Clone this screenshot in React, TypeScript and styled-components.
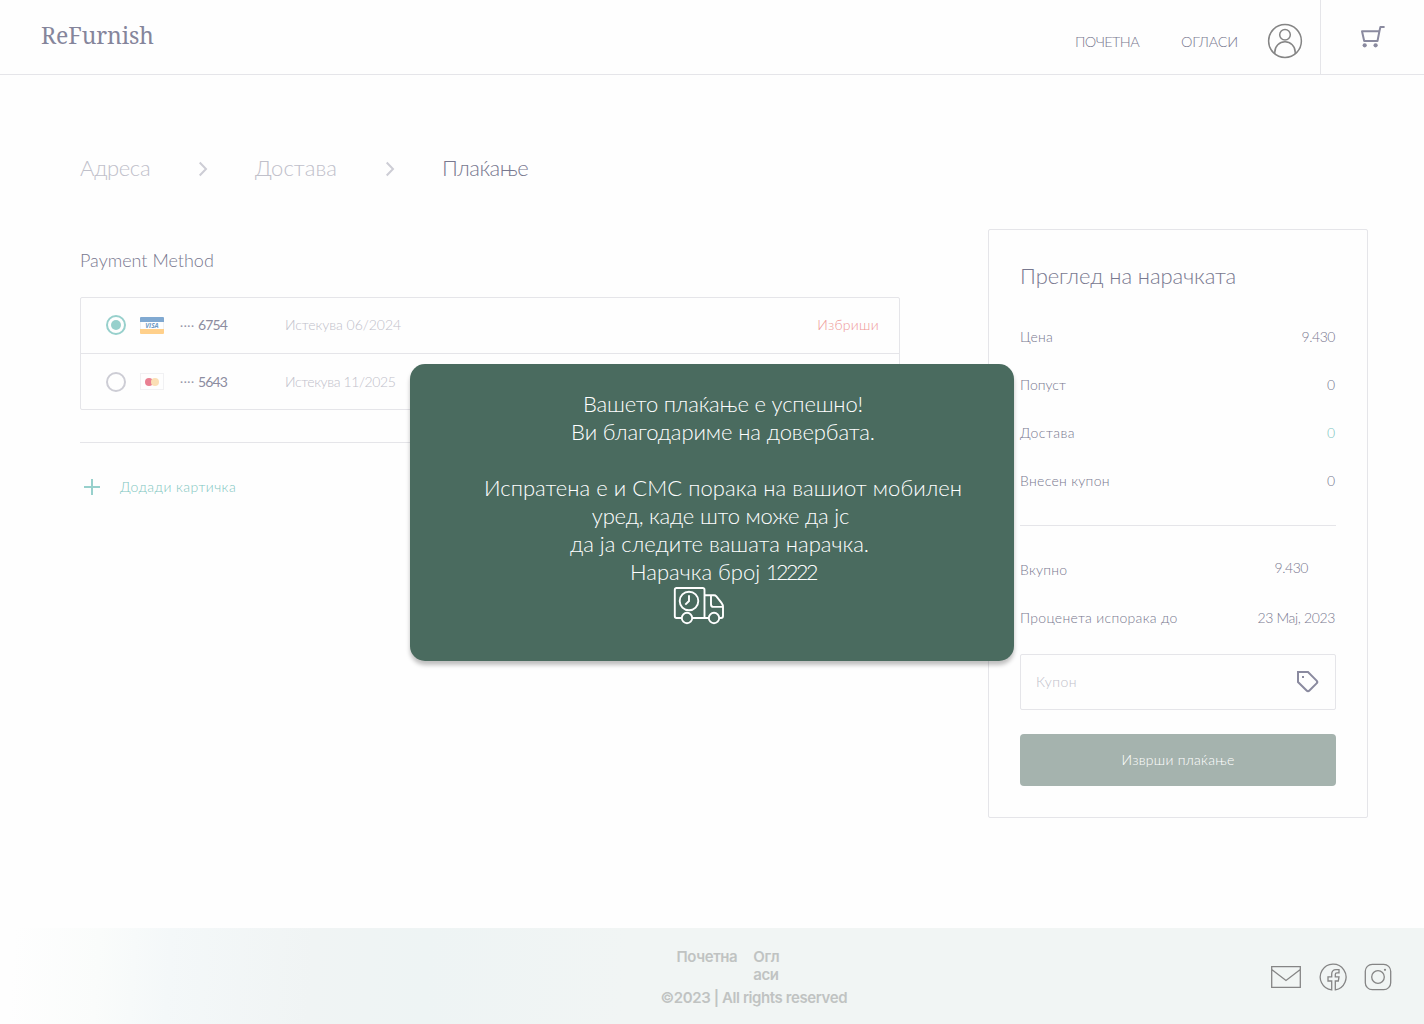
import React from "react";
import styled, { createGlobalStyle } from "styled-components";

const ink = "#78788f";
const iconInk = "#8a8a9f";
const pale = "#cdcdd5";
const paleText = "#c0c0ca";
const line = "#e5e5e9";
const teal = "#97d0cc";
const tealText = "#7fc6c1";
const grey = "#858585";

const GlobalStyle = createGlobalStyle`
  * { box-sizing: border-box; }
  body {
    margin: 0;
    background: #fefefe;
    color: ${ink};
    font: 300 14px/24px Lato, "Open Sans", sans-serif;
  }
  svg { display: block; flex: none; }
`;

const Page = styled.div`
  position: relative;
  width: 1424px;
  height: 1024px;
  overflow: hidden;
  display: flex;
  flex-direction: column;
`;

const Text = styled.span<{ $track?: number; $color?: string }>`
  white-space: nowrap;
  letter-spacing: ${(p) => p.$track ?? 0}px;
  color: ${(p) => p.$color ?? "inherit"};
`;

/* Header */
const Header = styled.header`
  display: flex;
  height: 75px;
  border-bottom: 1px solid ${line};
`;
const Logo = styled.div`
  flex: 1;
  padding: 19px 0 0 41px;
  font: 400 23px/32px "Noto Serif", serif;
  letter-spacing: -0.1px;
  color: #85859b;
`;
const Nav = styled.nav`
  display: flex;
  align-items: center;
  padding: 8px 17px 0 0;
  font-size: 14.5px;
`;
const NavLink = styled(Text)<{ $width: number }>`
  width: ${(p) => p.$width}px;
  padding-top: 1px;
`;
const CartCell = styled.div`
  width: 104px;
  border-left: 1px solid ${line};
  padding: 23px 0 0 37px;
`;

/* Main area */
const Main = styled.main`
  flex: 1;
  padding: 79px 56px 0 80px;
`;
const Breadcrumb = styled.div`
  display: flex;
  align-items: center;
  height: 30px;
  font-size: 22px;
  margin-bottom: 45px;
`;
const Step = styled(Text)<{ $width: number }>`
  width: ${(p) => p.$width}px;
  padding-bottom: 2px;
`;
const ChevronBox = styled.div`
  width: 57px;
`;
const Columns = styled.div`
  display: flex;
  gap: 88px;
  align-items: flex-start;
`;
const Methods = styled.section`
  width: 820px;
  padding-top: 19px;
`;
const MethodsTitle = styled.h2`
  margin: 0 0 25px;
  font-size: 18px;
  font-weight: 300;
  line-height: 24px;
`;
const CardList = styled.div`
  border: 1px solid ${line};
  border-radius: 2px;
`;
const CardRow = styled.div`
  display: grid;
  grid-template-columns: 34px 40px 18px 87px 1fr auto;
  align-items: center;
  height: 55px;
  padding: 0 20px 1px 25px;
  & + & {
    height: 56px;
    padding-bottom: 0;
    border-top: 1px solid ${line};
  }
`;
const Radio = styled.div<{ $on?: boolean }>`
  width: 20px;
  height: 20px;
  border: 2px solid ${(p) => (p.$on ? teal : pale)};
  border-radius: 50%;
  padding: 3px;
  &::after {
    content: "";
    display: block;
    width: 10px;
    height: 10px;
    border-radius: 50%;
    background: ${(p) => (p.$on ? teal : "transparent")};
  }
`;
const Visa = styled.div`
  width: 24px;
  height: 17px;
  border-radius: 1px;
  border-top: 5px solid #80a9d1;
  border-bottom: 5px solid #ffd08b;
  box-shadow: inset 1px 0 #f1f1f3, inset -1px 0 #f1f1f3;
  font: italic 700 6.5px/7px "Open Sans", sans-serif;
  color: #6f9cc6;
  text-align: center;
`;
const Mastercard = styled.div`
  display: flex;
  align-items: center;
  justify-content: center;
  width: 24px;
  height: 17px;
  border: 1px solid #f1f1f3;
`;
const Disc = styled.div<{ $color: string }>`
  width: 8px;
  height: 8px;
  border-radius: 50%;
  background: ${(p) => p.$color};
  & + & {
    margin-left: -2px;
  }
`;
const Dots = styled.span`
  padding-top: 1px;
  font: 700 11px/20px "Liberation Sans", sans-serif;
  color: #9a9aac;
`;
const Digits = styled(Text)`
  font-weight: 400;
  color: #8c8ca0;
`;
const Rule = styled.div<{ $gap: number }>`
  height: 1px;
  margin: ${(p) => p.$gap}px 0;
  background: ${line};
`;
const AddCard = styled.div`
  display: flex;
  align-items: center;
  gap: 16px;
`;

/* Order summary */
const Summary = styled.aside`
  width: 380px;
  height: 589px;
  border: 1px solid ${line};
  border-radius: 2px;
  padding: 31px;
`;
const SummaryTitle = styled.h2`
  margin: 0 0 22px;
  font-size: 22px;
  font-weight: 300;
  line-height: 30px;
  letter-spacing: -0.08px;
`;
const SummaryRow = styled.div`
  display: flex;
  justify-content: space-between;
  align-items: center;
  height: 48px;
  padding-right: 1px;
`;
const TotalValue = styled(Text)`
  margin: 0 27px 4px 0;
`;
const Coupon = styled.div`
  display: flex;
  justify-content: space-between;
  align-items: center;
  height: 56px;
  margin: 12px 0 24px;
  padding: 0 15px;
  border: 1px solid ${line};
  border-radius: 2px;
`;
const PayButton = styled.button`
  display: block;
  width: 100%;
  height: 52px;
  border: 0;
  border-radius: 4px;
  background: #a5b3ae;
  color: #fff;
  font: inherit;
`;

/* Confirmation dialog */
const Dialog = styled.div`
  position: absolute;
  left: 410px;
  top: 364px;
  width: 604px;
  height: 297px;
  display: flex;
  flex-direction: column;
  align-items: center;
  padding: 26px 0 0 22px;
  border-radius: 15px;
  background: #4a6b5f;
  box-shadow: 0 4px 4px rgba(0, 0, 0, 0.25);
  color: #fff;
  font-size: 22px;
`;
const DialogLine = styled(Text)<{ $shift?: number }>`
  height: 28px;
  line-height: 28px;
  margin-right: ${(p) => p.$shift ?? 0}px;
`;
const OrderNumber = styled.span`
  font-size: 21.5px;
  letter-spacing: -2.5px;
`;
const TruckBox = styled.div`
  margin-right: 48px;
`;

/* Footer */
const Footer = styled.footer`
  display: flex;
  justify-content: space-between;
  height: 96px;
  padding: 20px 32px 0 660.5px;
  background: linear-gradient(94deg, #fefefe 1%, #fafcfb 7%, #f4f8f9 12%, #f0f4f4 22%, #eef4f4 30%, #f1f5f4 44%);
  font: 600 15px/18px Inter, sans-serif;
  color: #c0c3c2;
  letter-spacing: -0.4px;
`;
const FooterLinks = styled.div`
  display: flex;
  gap: 16px;
  padding-left: 16px;
  margin-bottom: 5px;
`;
const WrappedLink = styled.span`
  width: 28px;
  word-break: break-all;
`;
const Socials = styled.div`
  display: flex;
  align-items: center;
  gap: 17.5px;
  height: 58px;
`;

const Chevron = () => (
  <svg width="10" height="16" viewBox="0 0 10 16" fill="none" stroke={pale} strokeWidth="2">
    <path d="M1.7 1.5 8 8l-6.3 6.5" />
  </svg>
);

const UserIcon = () => (
  <svg width="36" height="36" viewBox="0 0 36 36" fill="none" stroke={grey} strokeWidth="1.5">
    <circle cx="18" cy="18" r="16.4" />
    <circle cx="18" cy="11.7" r="5.3" />
    <path d="M7.8 30.8v-1.6a10.2 10.4 0 0 1 20.4 0v1.6" />
  </svg>
);

const CartIcon = () => (
  <svg width="28" height="28" viewBox="0 0 28 28" fill="none" stroke={iconInk} strokeWidth="2">
    <path d="M26.6 4H22.4l-1 4.3-1.9 9.7H6.2L4 8.300H21.300" strokeLinejoin="round" />
    <circle cx="6.7" cy="22.3" r="2.100" fill={iconInk} stroke="none" />
    <circle cx="17.6" cy="22.3" r="2.100" fill={iconInk} stroke="none" />
  </svg>
);

const PlusIcon = () => (
  <svg width="24" height="24" viewBox="0 0 24 24" stroke={teal} strokeWidth="2">
    <path d="M12 4v16M4 12h16" />
  </svg>
);

const TagIcon = () => (
  <svg width="24" height="24" viewBox="0 0 24 24" fill="none" stroke={iconInk} strokeWidth="2">
    <path d="M20.59 13.41l-7.17 7.17a2 2 0 0 1-2.83 0L2 12V2h10l8.59 8.59a2 2 0 0 1 0 2.82z" />
    <path d="M6 7h2" />
  </svg>
);

const TruckIcon = () => (
  <svg width="52" height="40" viewBox="0 0 52 40" fill="none" stroke="#fff" strokeWidth="1.9">
    <path d="M8.6 32H3.5a1.7 1.7 0 0 1-1.7-1.7V3.7A1.7 1.7 0 0 1 3.5 2h26.3a1.7 1.7 0 0 1 1.7 1.7V32M19.4 32h16.2M31.5 9.2H41c1 0 1.8.4 2.4 1.1l5.1 6.5c1 1.3 1.5 2.3 1.5 4V30a2 2 0 0 1-2 2h-1.6M38 9.5v9a2.4 2.4 0 0 0 2.4 2.4H50" />
    <circle cx="16" cy="15" r="9.3" />
    <path d="M16 9.3v5.700l-3.700 3.700" />
    <circle cx="14" cy="32" r="5.2" />
    <circle cx="41" cy="32" r="5.2" />
  </svg>
);

const MailIcon = () => (
  <svg width="30" height="22" viewBox="0 0 30 22" fill="none" stroke={grey} strokeWidth="1.3">
    <path d="M.7.7h28.6v20.6H.7zM.7 3.5 15 14.500 29.300 3.500" />
  </svg>
);

const FacebookIcon = () => (
  <svg width="28" height="28" viewBox="0 0 28 28" fill="none" stroke={grey} strokeWidth="1.3">
    <path d="M12.7 26.9a12.9 12.9 0 1 1 3.6-.1V18h3l.7-4.2h-3.7v-2.2c0-1.1.6-1.7 1.7-1.7h2V6.7h-3c-2.8 0-4.3 1.7-4.3 4.4v2.7H9V18h3.700z" />
  </svg>
);

const InstagramIcon = () => (
  <svg width="28" height="28" viewBox="0 0 28 28" fill="none" stroke={grey} strokeWidth="1.3">
    <rect x="1.3" y="1.3" width="25.4" height="25.4" rx="7" />
    <circle cx="14" cy="14" r="6.3" />
    <circle cx="21" cy="6.8" r="1.1" fill={grey} stroke="none" />
  </svg>
);

const prices = [
  { label: "Цена", track: 0.25, value: "9.430", valueTrack: -0.45 },
  { label: "Попуст", track: 0, value: "0" },
  { label: "Достава", track: 0.45, value: "0", color: tealText },
  { label: "Внесен купон", track: 0.3, value: "0" },
];

export default function App() {
  return (
    <Page>
      <GlobalStyle />
      <Header>
        <Logo>ReFurnish</Logo>
        <Nav>
          <NavLink $width={106} $track={-0.65}>ПОЧЕТНА</NavLink>
          <NavLink $width={86} $track={-0.25}>ОГЛАСИ</NavLink>
          <UserIcon />
        </Nav>
        <CartCell>
          <CartIcon />
        </CartCell>
      </Header>

      <Main>
        <Breadcrumb>
          <Step $width={118} $track={-0.35} $color={paleText}>Адреса</Step>
          <ChevronBox><Chevron /></ChevronBox>
          <Step $width={130} $track={0.1} $color={paleText}>Достава</Step>
          <ChevronBox><Chevron /></ChevronBox>
          <Step $width={90} $track={-0.5}>Плаќање</Step>
        </Breadcrumb>
        <Columns>
          <Methods>
            <MethodsTitle>Payment Method</MethodsTitle>
            <CardList>
              <CardRow>
                <Radio $on />
                <Visa>VISA</Visa>
                <Dots>····</Dots>
                <Digits $track={-0.9}>6754</Digits>
                <Text $track={-0.05} $color={paleText}>Истекува 06/2024</Text>
                <Text $track={0.3} $color="#ee9696">Избриши</Text>
              </CardRow>
              <CardRow>
                <Radio />
                <Mastercard>
                  <Disc $color="#e98092" />
                  <Disc $color="#fbdfb5" />
                </Mastercard>
                <Dots>····</Dots>
                <Digits $track={-0.9}>5643</Digits>
                <Text $track={-0.4} $color={paleText}>Истекува 11/2025</Text>
              </CardRow>
            </CardList>
            <Rule $gap={32} />
            <AddCard>
              <PlusIcon />
              <Text $track={0.45} $color={tealText}>Додади картичка</Text>
            </AddCard>
          </Methods>

          <Summary>
            <SummaryTitle>Преглед на нарачката</SummaryTitle>
            {prices.map((p) => (
              <SummaryRow key={p.label}>
                <Text $track={p.track}>{p.label}</Text>
                <Text $track={p.valueTrack} $color={p.color}>{p.value}</Text>
              </SummaryRow>
            ))}
            <Rule $gap={20} />
            <SummaryRow>
              <Text $track={0.25}>Вкупно</Text>
              <TotalValue $track={-0.45}>9.430</TotalValue>
            </SummaryRow>
            <SummaryRow>
              <Text $track={0.3}>Проценета испорака до</Text>
              <Text $track={-0.35}>23 Мај, 2023</Text>
            </SummaryRow>
            <Coupon>
              <Text $track={0.45} $color={paleText}>Купон</Text>
              <TagIcon />
            </Coupon>
            <PayButton>
              <Text $track={0.28}>Изврши плаќање</Text>
            </PayButton>
          </Summary>
        </Columns>
      </Main>

      <Footer>
        <div>
          <FooterLinks>
            <span>Почетна</span>
            <WrappedLink>Огласи</WrappedLink>
          </FooterLinks>
          <Text $track={-0.41}>©2023 | All rights reserved</Text>
        </div>
        <Socials>
          <MailIcon />
          <FacebookIcon />
          <InstagramIcon />
        </Socials>
      </Footer>

      <Dialog>
        <DialogLine $track={-0.18}>Вашето плаќање е успешно!</DialogLine>
        <DialogLine $track={-0.1}>Ви благодариме на довербата.</DialogLine>
        <DialogLine />
        <DialogLine $track={0.05}>Испратена е и СМС порака на вашиот мобилен</DialogLine>
        <DialogLine $track={-0.2} $shift={5}>уред, каде што може да јс</DialogLine>
        <DialogLine $shift={7}>да ја следите вашата нарачка.</DialogLine>
        <DialogLine>
          Нарачка број <OrderNumber>12222</OrderNumber>
        </DialogLine>
        <TruckBox>
          <TruckIcon />
        </TruckBox>
      </Dialog>
    </Page>
  );
}
